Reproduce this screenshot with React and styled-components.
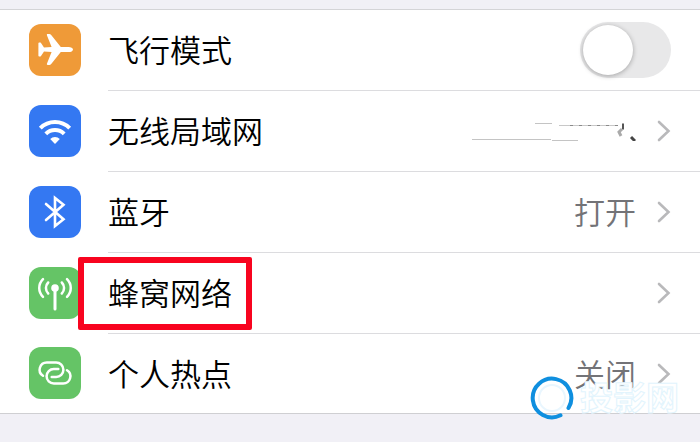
import React from "react";
import styled, { createGlobalStyle } from "styled-components";

const PlaneIcon = () => (
  <svg width="52" height="52" viewBox="0 0 52 52" aria-hidden="true">
    <path
      fill="#fff"
      d="M44 25.500c0 1.700-2 2.600-4.500 2.600H31.800L22 40.200c-.5.600-1 .8-1.600.8h-1.700c-.7 0-1-.5-.8-1.200L22.600 28l-7.600-.4-3 4.500c-.3.400-.6.500-1 .5h-.8c-.5 0-.8-.3-.8-.8V19.200c0-.5.300-.8.800-.8h.8c.4 0 .7.100 1 .5l3 4.500 7.600-.4L17.900 11.200c-.2-.7.100-1.200.8-1.200h1.700c.6 0 1.100.2 1.600.8l9.800 12.100h7.700c2.500 0 4.500.9 4.500 2.600z"
    />
  </svg>
);

const WifiIcon = () => (
  <svg width="52" height="52" viewBox="0 0 52 52" aria-hidden="true">
    <g fill="none" stroke="#fff" strokeWidth="4">
      <path d="M11.300 23.200a20.700 20.700 0 0 1 29.400 0" />
      <path d="M16.800 28.800a13 13 0 0 1 18.400 0" />
    </g>
    <path fill="#fff" d="M26 39l-4.800-4.900a6.800 6.800 0 0 1 9.600 0z" />
  </svg>
);

const BluetoothIcon = () => (
  <svg width="52" height="52" viewBox="0 0 52 52" aria-hidden="true">
    <path
      fill="none"
      stroke="#fff"
      strokeWidth="2.600"
      strokeLinecap="round"
      strokeLinejoin="miter"
      d="M17 18L34.500 33.300l-8.500 6.700V12l8.500 6.700L17 34"
    />
  </svg>
);

const CellularIcon = () => (
  <svg width="52" height="52" viewBox="0 0 52 52" aria-hidden="true">
    <circle cx="26" cy="21" r="3.800" fill="#fff" />
    <g fill="none" stroke="#fff" strokeWidth="2.500" strokeLinecap="round">
      <path strokeWidth="3" d="M26 22v20" />
      <path d="M19.200 15.500c-3 3-3 8 0 11" />
      <path d="M14 12.200c-5 5-5 12.600 0 17.600" />
      <path d="M32.800 15.500c3 3 3 8 0 11" />
      <path d="M38 12.200c5 5 5 12.600 0 17.600" />
    </g>
  </svg>
);

const HotspotIcon = () => (
  <svg width="52" height="52" viewBox="0 0 52 52" aria-hidden="true">
    <g fill="none" stroke="#fff" strokeWidth="2.500" strokeLinecap="round">
      <path d="M14 28.800A7.200 7.200 0 0 1 17.800 15.500H27.200a7.200 7.200 0 0 1 0 14.400h-4.500" />
      <path d="M38 23.200A7.200 7.200 0 0 1 34.200 36.500H24.800a7.200 7.200 0 0 1 0-14.400h4.500" />
    </g>
  </svg>
);

const Chevron = () => (
  <svg width="14" height="22" viewBox="0 0 14 22" aria-hidden="true">
    <path
      fill="none"
      stroke="#b9b9bb"
      strokeWidth="2.600"
      strokeLinecap="round"
      d="M2 2l9.500 9L2 20"
    />
  </svg>
);

// what is left of the network name after it was wiped out
const ErasedName = () => (
  <svg width="164" height="22" viewBox="0 0 164 22" role="img" aria-label="已隐藏">
    <g fill="none" strokeWidth="1">
      <path stroke="#c4c4c4" d="M0 20.500h79M80 21.500h26M63 4.500h17" />
      <path stroke="#c8c8c8" d="M87 6.500h58" />
      <path stroke="#8a8a8a" strokeDasharray="3 6" d="M98 6.500h50" />
      <path stroke="#555" strokeWidth="2" d="M151 4.500v6" />
      <path stroke="#aaa" strokeWidth="3" d="M150 10l-3 3 2 4" />
      <path stroke="#444" strokeWidth="3" d="M159 18l4 4" />
    </g>
  </svg>
);

const rows = [
  { id: "wifi", label: "无线局域网", color: "#3478f2", icon: <WifiIcon />, value: <ErasedName /> },
  { id: "bluetooth", label: "蓝牙", color: "#3478f2", icon: <BluetoothIcon />, value: "打开" },
  { id: "cellular", label: "蜂窝网络", color: "#65c466", icon: <CellularIcon />, marked: true },
  { id: "hotspot", label: "个人热点", color: "#65c466", icon: <HotspotIcon />, value: "关闭" },
];

const App = () => (
  <>
    <GlobalStyle />
    <Page>
      <List>
        <Item>
          <Row as="label" htmlFor="airplane">
            <Tile $color="#ef9a38">
              <PlaneIcon />
            </Tile>
            <Content>
              <Title>飞行模式</Title>
              <Switch id="airplane" type="checkbox" role="switch" />
            </Content>
          </Row>
        </Item>
        {rows.map((row) => (
          <Item key={row.id}>
            <Row href={`#${row.id}`}>
              <Tile $color={row.color}>{row.icon}</Tile>
              <Content>
                <Title $marked={row.marked}>{row.label}</Title>
                <Value>{row.value}</Value>
                <Chevron />
              </Content>
            </Row>
          </Item>
        ))}
        <Watermark>
          <svg width="44" height="44" viewBox="0 0 44 44" aria-hidden="true">
            <circle cx="22" cy="22" r="13" fill="none" stroke="#e9f6fe" strokeWidth="2" />
            <path
              fill="none"
              stroke="#0f8fdf"
              strokeWidth="4"
              strokeLinecap="round"
              d="M30.500 39.300A19.300 19.300 0 1 1 38.500 32"
            />
          </svg>
          <WatermarkText>投影网</WatermarkText>
        </Watermark>
      </List>
    </Page>
  </>
);

const GlobalStyle = createGlobalStyle`
  * {
    box-sizing: border-box;
  }
  body {
    margin: 0;
    background: #f1f0f6;
    color: #000;
    font-family: "Noto Sans CJK SC", sans-serif;
  }
`;

const Page = styled.main`
  padding: 9px 0 28px;
`;

const List = styled.ul`
  position: relative;
  margin: 0;
  padding: 0;
  list-style: none;
  background: #fff;
  border-top: 1px solid #d4d4d7;
`;

const Item = styled.li`
  &:nth-child(5) {
    border-bottom: 1px solid #cfcfd2;
  }
`;

const Row = styled.a`
  display: flex;
  align-items: center;
  gap: 27px;
  padding-left: 29px;
  color: inherit;
  text-decoration: none;
`;

const Tile = styled.span`
  display: flex;
  flex: none;
  width: 52px;
  height: 52px;
  margin-bottom: 1px;
  border-radius: 12px;
  background: ${(props) => props.$color};
`;

const Content = styled.span`
  display: flex;
  flex: 1;
  align-items: center;
  height: 81px;
  padding-right: 29px;
  border-bottom: 1px solid #dcdcdf;

  ${Item}:nth-child(5) & {
    height: 79px;
    border-bottom: 0;
  }
`;

const Title = styled.span`
  position: relative;
  margin-right: auto;
  padding-bottom: 2px;
  font-size: 31px;
  font-weight: 350;
  line-height: 40px;

  &::after {
    content: "";
    display: ${(props) => (props.$marked ? "block" : "none")};
    position: absolute;
    inset: -15px -20px -16px -30px;
    border: 6px solid #f8041f;
    border-radius: 2px;
  }
`;

const Value = styled.span`
  display: flex;
  margin-right: 21px;
  padding-bottom: 2px;
  color: #737377;
  font-size: 31px;
  font-weight: 350;
  line-height: 40px;
`;

const Switch = styled.input`
  appearance: none;
  display: flex;
  width: 91px;
  height: 56px;
  margin: 0;
  padding: 3px;
  border-radius: 28px;
  background: #e8e8e9;

  &::before {
    content: "";
    width: 50px;
    height: 50px;
    border-radius: 50%;
    background: #fff;
    box-shadow: 0 1px 5px rgba(0, 0, 0, 0.3);
  }

  &:checked {
    justify-content: flex-end;
    background: #65c466;
  }
`;

const Watermark = styled.li`
  position: absolute;
  right: 21px;
  bottom: -6px;
  display: flex;
  align-items: flex-start;
  gap: 6px;
  pointer-events: none;
`;

const WatermarkText = styled.span`
  color: #fff;
  font-size: 33px;
  font-weight: 700;
  line-height: 40px;
  -webkit-text-stroke: 1px #e2f4fd;
`;

export default App;
